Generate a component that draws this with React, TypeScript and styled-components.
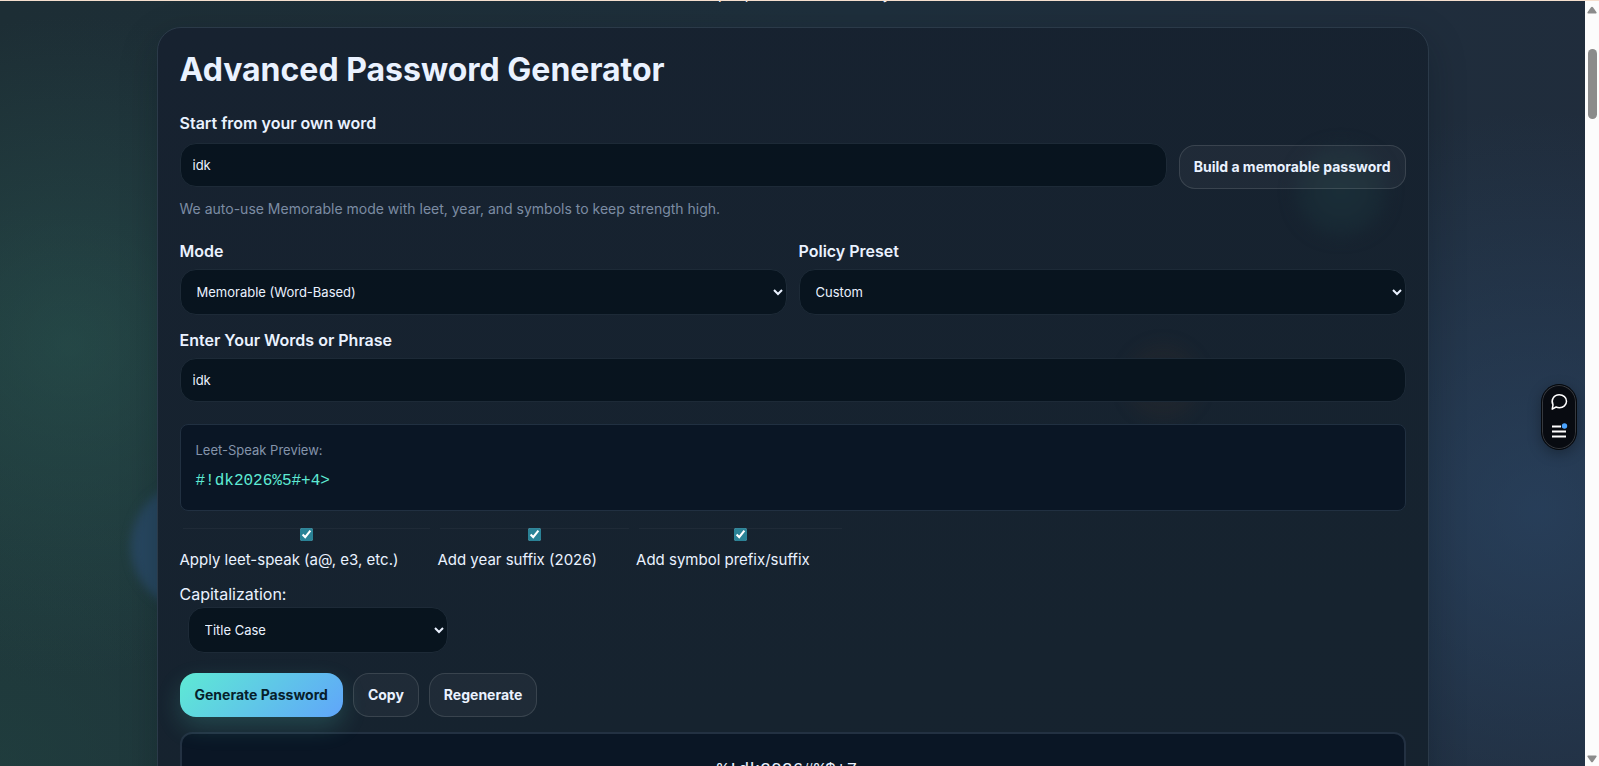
import React from "react";
import styled, { createGlobalStyle, css } from "styled-components";

const GlobalStyle = createGlobalStyle`
  *, *::before, *::after { box-sizing: border-box; }
  body {
    margin: 0;
    font-family: Inter, "Noto Sans", sans-serif;
    font-size: 16px;
    line-height: 24px;
    color: #eaf2ff;
    background: #1e2b38;
  }
  button, input, select { font: inherit; color: inherit; }
`;

const Shell = styled.div`
  height: 100vh;
  overflow: hidden;
  display: flex;
  border-top: 1px solid #f5dfce;
`;

const Page = styled.main`
  flex: 1;
  min-width: 0;
  position: relative;
  overflow: hidden;
  padding: 0 24px;
  background:
    radial-gradient(circle 330px at 70px 345px, rgba(43, 92, 84, 0.5), transparent),
    radial-gradient(circle 400px at 97% 510px, rgba(45, 76, 112, 0.55), transparent),
    radial-gradient(circle 560px at 0 100%, rgba(34, 74, 68, 0.5), transparent),
    linear-gradient(100deg, #1d2e35 0%, #1e2f3c 50%, #202c3c 100%);
`;

const Orb = styled.span<{ $x: string; $y: number; $size: number; $color: string; $soft?: boolean }>`
  position: absolute;
  z-index: ${(p) => (p.$soft ? -1 : 0)};
  left: ${(p) => p.$x};
  top: ${(p) => p.$y}px;
  width: ${(p) => p.$size}px;
  height: ${(p) => p.$size}px;
  border-radius: 50%;
  background: ${(p) => p.$color};
  filter: blur(${(p) => (p.$soft ? 8 : 5)}px);
  pointer-events: none;
`;

const Tagline = styled.p`
  margin: -18px 0 22px;
  height: 22px;
  font-size: 15px;
  line-height: 22px;
  text-align: center;
`;

const Card = styled.section`
  position: relative;
  isolation: isolate;
  max-width: 1272px;
  margin: 0 auto;
  padding: 21px 22px;
  height: 1100px;
  border: 1px solid #2b3a49;
  border-radius: 24px;
  background: linear-gradient(170deg, #172230 0%, #16232f 60%, #16222f 100%);
  box-shadow: 0 12px 36px rgba(6, 14, 24, 0.25);
`;

const Title = styled.h1`
  margin: 0 0 20px;
  font-size: 32px;
  line-height: 42px;
  font-weight: 700;
`;

const Label = styled.label`
  display: block;
  font-size: 16px;
  font-weight: 600;
  margin-bottom: 6px;
`;

const fieldStyle = css`
  display: block;
  width: 100%;
  border: 1px solid #1d2a37;
  border-radius: 16px;
  background: rgba(7, 19, 30, 0.94);
  font-size: 13px;
  line-height: 20px;
  outline: none;
`;

const TextInput = styled.input`
  ${fieldStyle}
  height: 44px;
  padding: 0 12px;
`;

const Select = styled.select<{ $compact?: boolean }>`
  ${fieldStyle}
  height: 46px;
  padding: 0 12px;
  ${(p) => p.$compact && css`width: 260px; margin-left: 8px;`}

  option { background: #08141f; }
`;

const WordRow = styled.div`
  display: flex;
  align-items: flex-start;
  gap: 12px;
  margin: 8px 0 10px;
`;

const Button = styled.button<{ $primary?: boolean }>`
  flex: none;
  height: 44px;
  padding: 0 14px;
  border: 1px solid rgba(255, 255, 255, 0.12);
  border-radius: 16px;
  background: rgba(255, 255, 255, 0.04);
  font-size: 14px;
  line-height: 20px;
  font-weight: 700;
  cursor: pointer;
  ${(p) =>
    p.$primary &&
    css`
      border-color: transparent;
      color: #06202b;
      background: linear-gradient(135deg, #5eead4, #60a5fa) border-box;
      box-shadow: 0 10px 24px rgba(94, 234, 212, 0.18);
    `}
`;

const BuildButton = styled(Button)`
  margin-top: 2px;
`;

const Hint = styled.p`
  margin: 0 0 20px;
  font-size: 14px;
  line-height: 20px;
  color: #7c8ca3;
`;

const Columns = styled.div`
  display: grid;
  grid-template-columns: 1fr 1fr;
  gap: 12px;
  margin-bottom: 13px;
`;

const Preview = styled.div`
  margin: 22px 0 17px;
  height: 87px;
  padding: 15px;
  border: 1px solid #213041;
  border-radius: 8px;
  background: #0a1625;
`;

const PreviewTitle = styled.div`
  font-size: 13px;
  line-height: 20px;
  color: #8494ab;
`;

const PreviewCode = styled.output`
  display: block;
  margin-top: 9px;
  font-family: "Liberation Mono", monospace;
  font-size: 16px;
  line-height: 24px;
  color: #5eead4;
`;

const Options = styled.div`
  display: flex;
  gap: 4px;
  margin-bottom: 10px;
`;

const Option = styled.label`
  display: flex;
  flex-direction: column;
  gap: 7px;
`;

const OptionText = styled.span`
  padding-right: 35px;
  font-size: 15px;
`;

const Check = styled.input`
  width: auto;
  height: 13px;
  margin: 0 3px;
  accent-color: #2a8296;
  box-shadow: inset 0 1px 0 rgba(255, 255, 255, 0.04);
`;

const CapLabel = styled.label`
  display: block;
  margin-bottom: 1px;
`;

const Actions = styled.div`
  display: flex;
  gap: 10px;
  margin: 20px 0 15px;
`;

const Result = styled.output`
  display: block;
  height: 80px;
  padding: 24px;
  border: 2px solid #233142;
  border-radius: 12px;
  background: #0a1625;
  font-family: "Liberation Mono", monospace;
  font-size: 18px;
  line-height: 24px;
  text-align: center;
`;

const Dock = styled.nav`
  position: absolute;
  right: 8px;
  top: 383px;
  width: 36px;
  height: 66px;
  padding: 4px 0;
  display: flex;
  flex-direction: column;
  align-items: center;
  gap: 3px;
  border: 1px solid #05080c;
  border-radius: 18px;
  background: #080b11;
  box-shadow: inset 0 0 0 1px #36393e, 0 4px 14px rgba(0, 0, 0, 0.3);
`;

const DockButton = styled.button`
  width: 26px;
  height: 26px;
  padding: 0;
  border: 0;
  background: none;
  display: grid;
  place-items: center;
`;

const ScrollTrack = styled.aside`
  flex: none;
  width: 14px;
  padding: 5px 0 3px;
  display: flex;
  flex-direction: column;
  align-items: center;
  background: #fcfcfc;
`;

const ScrollThumb = styled.div`
  width: 9px;
  height: 70px;
  margin: 35px 0 auto;
  border-radius: 5px;
  background: #8b8b8b;
`;

const Arrow = ({ down }: { down?: boolean }) => (
  <svg width="10" height="8" viewBox="0 0 10 8" fill="#8b8b8b" aria-hidden="true">
    <path
      d={
        down
          ? "M1 0.5h8q1 .2.5 1.2L6 6.7q-1 1-2 0L.5 1.7Q0 .7 1 .5z"
          : "M1 7.5h8q1-.2.5-1.2L6 1.3q-1-1-2 0L.5 6.3Q0 7.3 1 7.5z"
      }
    />
  </svg>
);

const options = ["Apply leet-speak (a@, e3, etc.)", "Add year suffix (2026)", "Add symbol prefix/suffix"];

export default function App() {
  return (
    <>
      <GlobalStyle />
      <Shell>
        <Page>
          <Orb $x="131px" $y={480} $size={130} $color="#284861" />
          <Tagline>for people who value safety</Tagline>
          <Card>
            <Orb $soft $x="calc(100% - 132px)" $y={118} $size={90} $color="radial-gradient(#1a2e38, #172632)" />
            <Orb $soft $x="calc(100% - 303px)" $y={316} $size={76} $color="rgba(70, 52, 36, 0.16)" />
            <Title>Advanced Password Generator</Title>
            <Label htmlFor="word">Start from your own word</Label>
            <WordRow>
              <TextInput id="word" defaultValue="idk" />
              <BuildButton type="button">Build a memorable password</BuildButton>
            </WordRow>
            <Hint>We auto-use Memorable mode with leet, year, and symbols to keep strength high.</Hint>
            <Columns>
              <div>
                <Label htmlFor="mode">Mode</Label>
                <Select id="mode">
                  <option>Memorable (Word-Based)</option>
                </Select>
              </div>
              <div>
                <Label htmlFor="policy">Policy Preset</Label>
                <Select id="policy">
                  <option>Custom</option>
                </Select>
              </div>
            </Columns>
            <Label htmlFor="phrase">Enter Your Words or Phrase</Label>
            <TextInput id="phrase" defaultValue="idk" />
            <Preview>
              <PreviewTitle>Leet-Speak Preview:</PreviewTitle>
              <PreviewCode>#!dk2026%5#+4&gt;</PreviewCode>
            </Preview>
            <Options>
              {options.map((text) => (
                <Option key={text}>
                  <Check type="checkbox" defaultChecked />
                  <OptionText>{text}</OptionText>
                </Option>
              ))}
            </Options>
            <CapLabel htmlFor="caps">Capitalization:</CapLabel>
            <Select id="caps" $compact>
              <option>Title Case</option>
            </Select>
            <Actions>
              <Button type="button" $primary>Generate Password</Button>
              <Button type="button">Copy</Button>
              <Button type="button">Regenerate</Button>
            </Actions>
            <Result>%!dk2026#%$+7-</Result>
          </Card>
          <Dock>
            <DockButton type="button" aria-label="Chat">
              <svg width="18" height="18" viewBox="0 0 18 18" fill="none" stroke="#fff" strokeWidth="1.5" strokeLinejoin="round">
                <path d="M2.2 16.2 3 11.8C.6 7.300 3.600 1.800 9.200 1.800c4.200 0 7.300 2.700 7.300 6.400s-3.100 6.500-7.100 6.500c-1.200 0-2.300-.2-3.300-.7z" />
              </svg>
            </DockButton>
            <DockButton type="button" aria-label="Menu">
              <svg width="18" height="18" viewBox="0 0 18 18">
                <path d="M2 4.500h9M2 9.500h14M2 14.500h14" stroke="#fff" strokeWidth="1.800" />
                <circle cx="14.500" cy="4" r="2.700" fill="#4aa3ff" />
              </svg>
            </DockButton>
          </Dock>
        </Page>
        <ScrollTrack>
          <Arrow />
          <ScrollThumb />
          <Arrow down />
        </ScrollTrack>
      </Shell>
    </>
  );
}
